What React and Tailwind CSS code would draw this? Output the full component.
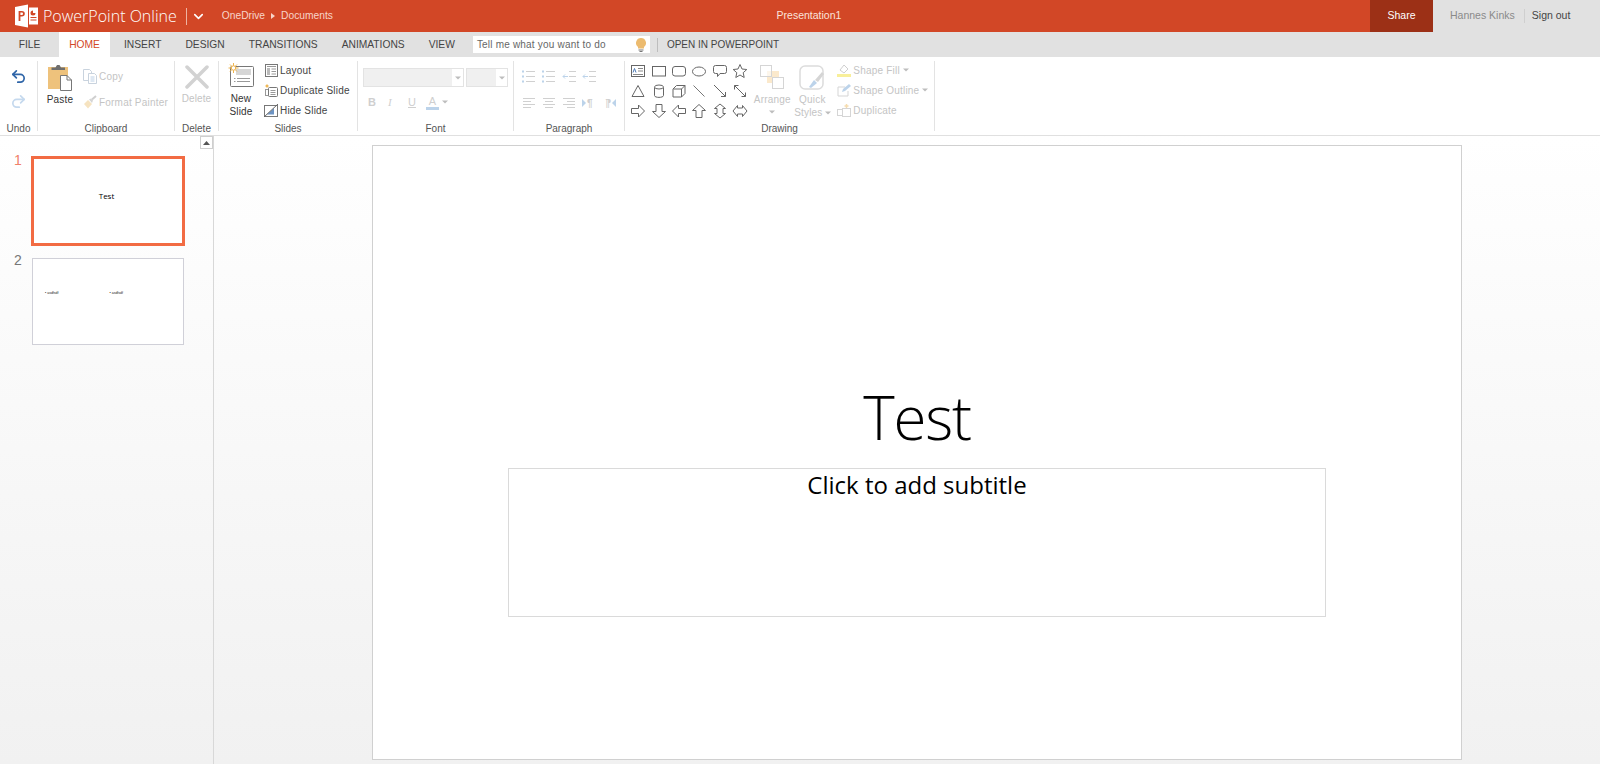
import React from "react";
import { Undo2, Redo2, ChevronDown } from "lucide-react";

const Caret = ({ className = "" }) => (
  <svg width="6" height="4" viewBox="0 0 6 4" className={className}>
    <path d="M0 0.5h6L3 3.5z" fill="#bdbdbd" />
  </svg>
);

const Tabs = ["INSERT", "DESIGN", "TRANSITIONS", "ANIMATIONS", "VIEW"];

const PowerPointLogo = () => (
  <svg width="23" height="24" viewBox="0 0 23 24">
    <path d="M0 3L13 0.5V23.5L0 21z" fill="#fff" />
    <path d="M14 3.5H23V20.5H14z" fill="#fff" />
    <path d="M3.6 7h3.2c2 0 3 1 3 2.7s-1.1 2.8-3 2.8H5.4V17H3.6zM5.4 8.5v2.6h1.1c1 0 1.5-.5 1.5-1.3S7.500 8.500 6.500 8.500z" fill="#d24726" />
    <path d="M15.500 9a2.500 2.500 0 1 0 5 0h-2.500V6.500a2.500 2.500 0 0 0-2.500 2.500z" fill="#d24726" />
    <path d="M15.500 13.500h6M15.500 16h6" stroke="#d24726" strokeWidth="1" />
  </svg>
);

const PasteIcon = () => (
  <svg width="26" height="26" viewBox="0 0 26 26">
    <rect x="1" y="2" width="20" height="22" fill="#eec27c" />
    <path d="M4.500 5V2.500h4L10 0h2.500L14 2.500h4V5z" fill="#6e6e6e" />
    <path d="M13.500 10.500H20l4.500 4.500v10.500h-11z" fill="#fff" stroke="#777" />
    <path d="M20 10.500V15h4.500" fill="none" stroke="#777" />
  </svg>
);

const CopyIcon = () => (
  <svg width="14" height="15" viewBox="0 0 14 15" fill="#fff" stroke="#c9d3de">
    <path d="M.5.5h6l2 2v9h-8z" />
    <path d="M5.500 4.500h6l2 2v8h-8z" />
    <path d="M7.500 8h4M7.500 10h4M7.500 12h4" stroke="#bcd0e6" />
  </svg>
);

const PainterIcon = () => (
  <svg width="14" height="14" viewBox="0 0 14 14">
    <path d="M1 9l4-4 4 4-4 4.500z" fill="#f6e3c0" />
    <path d="M6 4.500l2-1 2 2-1 2.500z" fill="#d5d5d5" />
    <path d="M9 4.500L13 1" stroke="#cfcfcf" strokeWidth="2" />
  </svg>
);

const NewSlideIcon = () => (
  <svg width="26" height="26" viewBox="0 0 26 26">
    <rect x="2.500" y="3.500" width="23" height="20" rx="1" fill="#fff" stroke="#777" />
    <rect x="8" y="6" width="15" height="6" fill="#d6d6d6" />
    <path d="M6 15.500h1.500M9 15.500h13M6 18.500h1.500M9 18.500h13" stroke="#999" />
    <g stroke="#efb54f" strokeWidth="1">
      <path d="M5.500 0v10M.5 5h10M2 1.500l7 7M9 1.500l-7 7" />
    </g>
    <circle cx="5.500" cy="5" r="2.200" fill="#fff" stroke="#efb54f" />
  </svg>
);

const LayoutIcon = () => (
  <svg width="13" height="13" viewBox="0 0 13 13" fill="none">
    <rect x=".5" y=".5" width="12" height="12" stroke="#777" fill="#fff" />
    <path d="M2 2.500h9" stroke="#999" />
    <rect x="2" y="4" width="3" height="7" fill="#bbb" />
    <path d="M6.500 5h4.500M6.500 7.500h4.500M6.500 10h4.500" stroke="#999" />
  </svg>
);

const DuplicateIcon = () => (
  <svg width="14" height="14" viewBox="0 0 14 14" fill="none">
    <path d="M3 1.500v3M1.500 3h3" stroke="#efb54f" strokeWidth="1.500" />
    <rect x="1.500" y="6.500" width="4" height="6" stroke="#999" />
    <rect x="4.500" y="4.500" width="9" height="9" rx="1" stroke="#777" fill="#fff" />
    <path d="M6.500 7.500h5M6.500 9.500h5M6.500 11.500h5" stroke="#999" />
  </svg>
);

const HideSlideIcon = () => (
  <svg width="14" height="13" viewBox="0 0 14 13" fill="none">
    <rect x=".5" y="1.500" width="13" height="11" stroke="#777" fill="#fff" />
    <path d="M3 10.500L10 4v6.500z" fill="#6d94c4" />
    <path d="M0 13L14 0" stroke="#666" />
  </svg>
);

const ListIcon = ({ lines, color = "#d0d0d0", bullets = false, indent = false }) => (
  <svg width="14" height="13" viewBox="0 0 14 13" fill="none">
    {lines.map(([x1, x2, y]) => (
      <path key={y} d={`M${x1} ${y}.5H${x2}`} stroke={color} />
    ))}
    {bullets && (
      <path d="M0 1.500h2M0 6.500h2M0 11.500h2" stroke="#bcd3ea" strokeWidth="2" />
    )}
    {indent && <path d="M6 6.500H1M3 4.500l-2 2 2 2" stroke="#bcd3ea" />}
  </svg>
);

const ParagraphMark = ({ flip }) => (
  <svg width="14" height="10" viewBox="0 0 14 10" className={flip ? "-scale-x-100" : ""}>
    <path d="M0 1l4 4-4 4z" fill="#bcd3ea" />
    <text x="5" y="9" fontSize="10" fontWeight="700" fill="#cfcfcf">¶</text>
  </svg>
);

const shapes = [
  <g key="text"><rect x="1.500" y="2.500" width="13" height="11" /><path d="M3 9.500l1.500-4 1.500 4" stroke="#4a78b5" /><path d="M8 5.500h5M8 8h5M3 11.500h10" stroke="#888" /></g>,
  <rect key="rect" x="1.500" y="3.500" width="13" height="9.500" />,
  <rect key="round" x="1.500" y="3.500" width="13" height="9.500" rx="2.500" />,
  <ellipse key="oval" cx="8" cy="8.500" rx="6.500" ry="4.500" />,
  <path key="callout" d="M3.500 2.500h9a2 2 0 0 1 2 2v4a2 2 0 0 1-2 2H8l-2.500 3v-3h-2a2 2 0 0 1-2-2v-4a2 2 0 0 1 2-2z" />,
  <path key="star" d="M8 1.500l2 4.500 4.800.5-3.600 3.200 1 4.800L8 12l-4.200 2.500 1-4.800L1.200 6.500 6 6z" />,
  <path key="tri" d="M8 2.500l6 11H2z" />,
  <g key="can"><path d="M3.500 4.500v8c0 2.500 9 2.500 9 0v-8z" /><ellipse cx="8" cy="4" rx="4.500" ry="2" /></g>,
  <g key="cube"><path d="M2 6l3.500-3.500H14v8L10.500 14H2z" /><path d="M2 6h8.500v8M10.500 6L14 2.500" /></g>,
  <path key="line" d="M2.500 2.500l11 11" stroke="#777" />,
  <path key="arrow" d="M2 2l11.500 11.500M13.500 9v4.500H9" fill="none" />,
  <path key="darrow" d="M2.500 2.500l11 11M2.500 6.500v-4h4M13.500 9.500v4h-4" fill="none" />,
  <path key="right" d="M1.500 5.500h7V2l6 6-6 6v-3.500h-7z" />,
  <path key="down" d="M5 1.500v7H1.500l6.500 6 6.500-6H11v-7z" />,
  <path key="left" d="M14.500 5.500h-7V2l-6 6 6 6v-3.500h7z" />,
  <path key="up" d="M5 14.500v-7H1.500L8 1.500l6.500 6H11v7z" />,
  <path key="updown" d="M8 1l5.500 4.500H11v5h2.500L8 15l-5.500-4.500H5v-5H2.500z" />,
  <path key="leftright" d="M1 8l4.500-5.500V5h5V2.500L15 8l-4.500 5.500V11h-5v2.500z" />,
];

const ShapeIcon = ({ children }) => (
  <div className="flex h-5 items-center justify-center">
    <svg width="16" height="16" viewBox="0 0 16 16" fill="#fff" stroke="#666">
      {children}
    </svg>
  </div>
);

const ArrangeIcon = () => (
  <svg width="24" height="24" viewBox="0 0 24 24">
    <rect x="7" y="6" width="12" height="12" fill="#fbe9cc" />
    <rect x=".5" y=".5" width="11" height="11" fill="#fff" fillOpacity=".6" stroke="#d5d5d5" />
    <rect x="12.500" y="12.500" width="11" height="11" fill="#fff" stroke="#d5d5d5" />
  </svg>
);

const QuickStylesIcon = () => (
  <svg width="26" height="26" viewBox="0 0 26 26" fill="none">
    <rect x="1" y="1" width="23" height="23" rx="5" stroke="#dcdcdc" strokeWidth="1.500" />
    <path d="M10 22l5-7 3 3-6 5z" fill="#bcd3ea" />
    <path d="M16 15l7-8 2 2-6 8z" fill="#d5d5d5" />
  </svg>
);

const ShapeFillIcon = () => (
  <svg width="14" height="14" viewBox="0 0 14 14">
    <path d="M3 7l4-5 4 4-4 4z" fill="#fff" stroke="#cfcfcf" />
    <rect x="0" y="11" width="14" height="3" fill="#f8ef9a" />
  </svg>
);

const ShapeOutlineIcon = () => (
  <svg width="14" height="14" viewBox="0 0 14 14" fill="none">
    <path d="M11 8v5H1V4h7" stroke="#d5d5d5" />
    <path d="M5 9l1-3 6-5 2 2-6 5z" fill="#bcd3ea" />
  </svg>
);

const ShapeDuplicateIcon = () => (
  <svg width="14" height="13" viewBox="0 0 14 13" fill="none">
    <rect x=".5" y="5.500" width="5" height="6" stroke="#d5d5d5" />
    <rect x="5.500" y="4.500" width="8" height="8" stroke="#d5d5d5" fill="#fff" />
    <path d="M9.500 0v4M7.500 2h4" stroke="#f6dcae" strokeWidth="1.500" />
  </svg>
);

const Group = ({ width, label, children }) => (
  <div className={`flex h-[70px] flex-col border-r border-[#e3e3e3] ${width}`}>
    <div className="flex h-[62px] shrink-0">{children}</div>
    <div className="text-center text-[10px] leading-[12px] text-[#555]">{label}</div>
  </div>
);

const SmallRow = ({ icon, children, color = "text-[#444]" }) => (
  <div className="flex h-5 items-center">
    <span className="flex w-4 justify-center">{icon}</span>
    <span className={`ml-[1px] whitespace-nowrap text-[10px] tracking-[0.2px] ${color}`}>{children}</span>
  </div>
);

const App = () => {
  return (
    <div className="flex h-[764px] w-[1600px] flex-col overflow-hidden bg-white font-['Liberation_Sans',Arial,sans-serif]">
      {/* top bar */}
      <div className="flex h-8 shrink-0 bg-[#d24726] text-white">
        <div className="flex w-[740px] items-center pl-[15px]">
          <PowerPointLogo />
          <span className="ml-[5px] font-['Open_Sans',sans-serif] text-[16px] font-light">PowerPoint Online</span>
          <span className="ml-[9px] h-[17px] w-px bg-[#eeb3a2]" />
          <ChevronDown size={15} strokeWidth={2.5} className="ml-[4px]" />
          <span className="ml-[16px] text-[10.25px] text-[#f8d5c9]">OneDrive</span>
          <svg width="4" height="6" viewBox="0 0 4 6" className="ml-[6px]">
            <path d="M0 0l4 3-4 3z" fill="#f8d5c9" />
          </svg>
          <span className="ml-[6px] text-[10.25px] text-[#f8d5c9]">Documents</span>
        </div>
        <div className="flex w-[138px] items-center justify-center text-[10.5px] text-[#fbe3db]">Presentation1</div>
        <div className="flex-1" />
        <div className="flex w-[63px] items-center justify-center bg-[#9c3016] text-[10.5px]">Share</div>
        <div className="flex w-[167px] items-center bg-[#e1e1e1] pl-[17px] text-[10.5px]">
          <span className="text-[#8a8a8a]">Hannes Kinks</span>
          <span className="ml-[9px] h-[14px] w-px bg-[#cfcfcf]" />
          <span className="ml-[7px] text-[#444]">Sign out</span>
        </div>
      </div>

      {/* tabs */}
      <div className="flex h-[25px] shrink-0 items-center bg-[#e1e1e1] text-[10.25px] text-[#444]">
        <div className="flex h-full w-[59px] items-center justify-center">FILE</div>
        <div className="flex h-full w-[51px] items-center justify-center bg-white text-[#d24726]">HOME</div>
        <div className="flex h-full items-center gap-6 pl-[14px]">
          {Tabs.map((tab) => (
            <span key={tab}>{tab}</span>
          ))}
        </div>
        <div className="ml-[18px] flex h-[17px] w-[177px] items-center justify-between bg-white pl-[4px] pr-[4px] text-[10px] tracking-[0.2px] text-[#666]">
          <span>Tell me what you want to do</span>
          <svg width="10" height="14" viewBox="0 0 10 14">
            <path d="M5 0a5 5 0 0 1 3 9v1.500H2V9a5 5 0 0 1 3-9z" fill="#ecbb6f" />
            <path d="M2.500 12h5M3.500 13.500h3" stroke="#777" />
          </svg>
        </div>
        <span className="ml-[7px] h-[14px] w-px bg-[#bdbdbd]" />
        <span className="ml-[9px] text-[10px]">OPEN IN POWERPOINT</span>
      </div>

      {/* ribbon */}
      <div className="flex h-[79px] shrink-0 border-b border-[#e0e0e0] bg-white pt-[4px]">
        <Group width="w-[38px]" label="Undo">
          <div className="flex w-full flex-col items-center pt-[7px]">
            <Undo2 size={17} strokeWidth={2.4} color="#2f65a8" />
            <Redo2 size={17} strokeWidth={2.4} color="#c5d9ee" className="mt-2" />
          </div>
        </Group>
        <Group width="w-[137px]" label="Clipboard">
          <div className="flex w-[44px] flex-col items-center pt-[4px]">
            <PasteIcon />
            <span className="mt-[1px] text-[10px] tracking-[0.2px] text-[#333]">Paste</span>
          </div>
          <div className="flex flex-col pt-[5px]">
            <SmallRow icon={<CopyIcon />} color="text-[#c4c4c4]">Copy</SmallRow>
            <div className="h-[6px]" />
            <SmallRow icon={<PainterIcon />} color="text-[#c4c4c4] tracking-[0.1px]">Format Painter</SmallRow>
          </div>
        </Group>
        <Group width="w-[44px]" label="Delete">
          <div className="flex w-full flex-col items-center pt-[4px]">
            <svg width="24" height="24" viewBox="0 0 24 24">
              <path d="M2 2l20 20M22 2L2 22" stroke="#d2d2d2" strokeWidth="3.500" strokeLinecap="round" />
            </svg>
            <span className="mt-[2px] text-[10px] tracking-[0.1px] text-[#c4c4c4]">Delete</span>
          </div>
        </Group>
        <Group width="w-[139px]" label="Slides">
          <div className="flex w-[44px] flex-col items-center pt-[2px]">
            <NewSlideIcon />
            <span className="mt-[3px] text-center text-[10px] leading-[13px] tracking-[0.2px] text-[#333]">
              New
              <br />
              Slide
            </span>
          </div>
          <div className="-mt-[1px] flex flex-col">
            <SmallRow icon={<LayoutIcon />}>Layout</SmallRow>
            <SmallRow icon={<DuplicateIcon />}>Duplicate Slide</SmallRow>
            <SmallRow icon={<HideSlideIcon />}>Hide Slide</SmallRow>
          </div>
        </Group>
        <Group width="w-[156px]" label="Font">
          <div className="flex w-full flex-col pl-[5px] pt-[7px]">
            <div className="flex gap-[2px]">
              <div className="flex h-[19px] w-[101px] items-center border border-[#e3e3e3] bg-[#f0f0f0]">
                <div className="ml-auto flex h-full w-[11px] items-center justify-center bg-white">
                  <Caret />
                </div>
              </div>
              <div className="flex h-[19px] w-[42px] items-center border border-[#e3e3e3] bg-[#f0f0f0]">
                <div className="ml-auto flex h-full w-[11px] items-center justify-center bg-white">
                  <Caret />
                </div>
              </div>
            </div>
            <div className="mt-[7px] flex items-center pl-[5px] text-[11px] text-[#cfcfcf]">
              <span className="w-5 font-bold">B</span>
              <span className="w-5 font-['Liberation_Serif',serif] italic">I</span>
              <span className="w-[18px] underline">U</span>
              <span className="w-[13px] border-b-[3px] border-[#bcd3ea] text-center leading-[12px]">A</span>
              <Caret className="ml-[3px]" />
            </div>
          </div>
        </Group>
        <Group width="w-[111px]" label="Paragraph">
          <div className="flex w-full flex-col pl-[8px] pt-[9px]">
            <div className="flex gap-[6px]">
              <ListIcon bullets lines={[[4, 13, 1], [4, 13, 6], [4, 13, 11]]} />
              <ListIcon bullets lines={[[4, 13, 1], [4, 13, 6], [4, 13, 11]]} />
              <ListIcon indent lines={[[7, 14, 1], [7, 14, 6], [7, 14, 11]]} />
              <ListIcon indent lines={[[7, 14, 1], [7, 14, 6], [7, 14, 11]]} />
            </div>
            <div className="mt-[13px] flex items-center gap-[6px]">
              <ListIcon lines={[[1, 13, 2], [1, 9, 5], [1, 13, 8], [1, 9, 11]]} />
              <ListIcon lines={[[1, 13, 2], [3, 11, 5], [1, 13, 8], [3, 11, 11]]} />
              <ListIcon lines={[[1, 13, 2], [5, 13, 5], [1, 13, 8], [5, 13, 11]]} />
              <ParagraphMark />
              <ParagraphMark flip />
            </div>
          </div>
        </Group>
        <Group width="w-[310px]" label="Drawing">
          <div className="grid h-[60px] grid-cols-[repeat(6,20.4px)] content-start pl-[3px]">
            {shapes.map((shape) => (
              <ShapeIcon key={shape.key}>{shape}</ShapeIcon>
            ))}
          </div>
          <div className="flex w-[44px] flex-col items-center pt-[4px] text-[10px] text-[#c4c4c4]">
            <ArrangeIcon />
            <span className="mt-[3px] tracking-[0.2px]">Arrange</span>
            <Caret className="mt-[3px]" />
          </div>
          <div className="-ml-[2px] flex w-[40px] flex-col items-center pt-[4px] text-center text-[10px] leading-[13px] text-[#c4c4c4]">
            <QuickStylesIcon />
            <span className="mt-[2px] tracking-[0.2px]">Quick</span>
            <span className="flex items-center gap-[2px] tracking-[0.2px]">
              Styles
              <Caret />
            </span>
          </div>
          <div className="-mt-[1px] flex flex-col pl-[4px]">
            <SmallRow icon={<ShapeFillIcon />} color="text-[#c4c4c4]">
              <span className="flex items-center gap-[3px]">Shape Fill<Caret /></span>
            </SmallRow>
            <SmallRow icon={<ShapeOutlineIcon />} color="text-[#c4c4c4]">
              <span className="flex items-center gap-[3px]">Shape Outline<Caret /></span>
            </SmallRow>
            <SmallRow icon={<ShapeDuplicateIcon />} color="text-[#c4c4c4]">Duplicate</SmallRow>
          </div>
        </Group>
      </div>

      {/* workspace */}
      <div className="flex min-h-0 flex-1 bg-gradient-to-b from-white to-[#f1f1f1]">
        <div className="flex w-[214px] shrink-0 flex-col border-r border-[#d8d8d8]">
          <div className="flex justify-end">
            <div className="flex h-[13px] w-[13px] items-center justify-center border border-[#cfcfcf] bg-white">
              <svg width="7" height="4" viewBox="0 0 7 4">
                <path d="M0 4l3.500-4L7 4z" fill="#555" />
              </svg>
            </div>
          </div>
          <div className="flex pl-[14px] pt-[7px]">
            <span className="-mt-[4px] w-[17px] text-[14px] leading-[16px] text-[#f0816a]">1</span>
            <div className="flex h-[90px] w-[154px] items-center justify-center border-[3px] border-[#f26b43] bg-white pb-[10px] pr-[3px] font-['Open_Sans',sans-serif] text-[8px] text-black">
              Test
            </div>
          </div>
          <div className="flex pl-[14px] pt-[12px]">
            <span className="-mt-[6px] w-[18px] text-[14px] leading-[16px] text-[#777]">2</span>
            <div className="flex h-[87px] w-[152px] gap-[51px] border border-[#d0d0d8] bg-white pl-[12px] pt-[31px] text-[3.5px] leading-[6px] text-[#222]">
              <span>• asdfsdf</span>
              <span>• asdfsdf</span>
            </div>
          </div>
        </div>

        <div className="min-w-0 flex-1 pl-[158px] pt-[9px]">
          <div className="flex h-[615px] w-[1090px] flex-col items-center border border-[#d0d0d0] bg-white font-['Open_Sans',sans-serif] text-black">
            <div className="mt-[237px] text-[60px] font-light leading-[68px] tracking-[-1.2px]">Test</div>
            <div className="mt-[17px] flex h-[149px] w-[818px] justify-center border border-[#dadada] text-[24px] leading-[32px]">
              Click to add subtitle
            </div>
          </div>
        </div>
      </div>
    </div>
  );
};

export default App;
